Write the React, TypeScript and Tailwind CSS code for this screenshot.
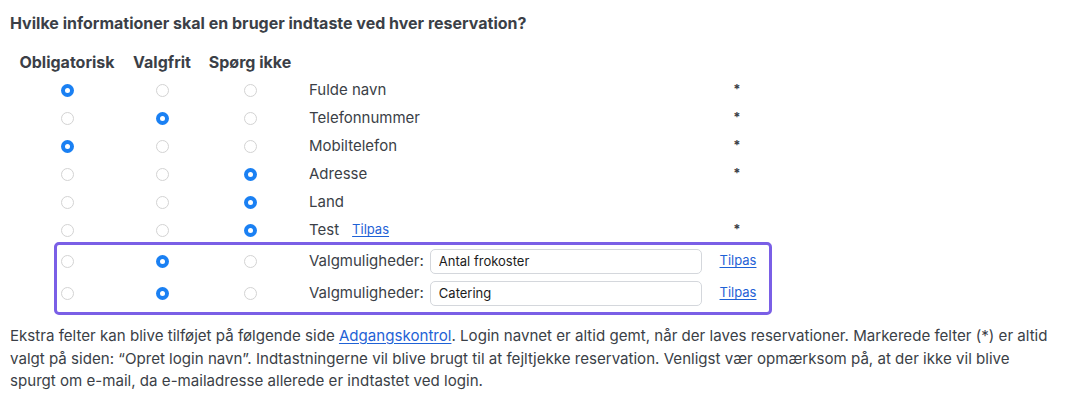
import React from "react";

type Choice = 0 | 1 | 2;

const rows: { label: string; choice: Choice; star: boolean; custom?: boolean }[] = [
  { label: "Fulde navn", choice: 0, star: true },
  { label: "Telefonnummer", choice: 1, star: true },
  { label: "Mobiltelefon", choice: 0, star: true },
  { label: "Adresse", choice: 2, star: true },
  { label: "Land", choice: 2, star: false },
  { label: "Test", choice: 2, star: true, custom: true },
];

const options = [
  { choice: 1 as Choice, value: "Antal frokoster" },
  { choice: 1 as Choice, value: "Catering" },
];

function Radio({ checked }: { checked: boolean }) {
  if (checked) {
    return (
      <span className="flex h-[13px] w-[13px] items-center justify-center rounded-full bg-[#1a80f3]">
        <span className="h-[5px] w-[5px] rounded-full bg-white" />
      </span>
    );
  }
  return <span className="block h-[13px] w-[13px] rounded-full border border-[#d3d3d3] bg-white" />;
}

function RadioCells({ choice }: { choice: Choice }) {
  return (
    <>
      <div className="flex w-[114px] items-center justify-center">
        <Radio checked={choice === 0} />
      </div>
      <div className="flex w-[76px] items-center justify-center">
        <Radio checked={choice === 1} />
      </div>
      <div className="flex w-[100px] items-center justify-center">
        <Radio checked={choice === 2} />
      </div>
    </>
  );
}

function Tilpas() {
  return (
    <a href="#" className="text-[13px] text-[#1f62d6] underline underline-offset-2">
      Tilpas
    </a>
  );
}

export default function App() {
  return (
    <div
      className="min-h-screen bg-white px-[10px] pt-[13px] text-[15px] text-[#3b3f47]"
      style={{ fontFamily: "Inter, 'Liberation Sans', sans-serif" }}
    >
      <h2 className="text-[16px] font-bold leading-[20px]">
        Hvilke informationer skal en bruger indtaste ved hver reservation?
      </h2>

      <div className="mt-[15px]">
        <div className="flex h-[28px] items-center text-[16px] font-bold">
          <div className="w-[114px] text-center">Obligatorisk</div>
          <div className="w-[76px] text-center">Valgfrit</div>
          <div className="w-[100px] text-center">Spørg ikke</div>
        </div>

        {rows.map((r) => (
          <div key={r.label} className="flex h-[28px] items-center">
            <RadioCells choice={r.choice} />
            <div className="flex w-[409px] items-center gap-[13px] pl-[9px]">
              <span>{r.label}</span>
              {r.custom && <Tilpas />}
            </div>
            <div className="w-[56px] text-center text-[13px] font-bold">{r.star ? "*" : ""}</div>
          </div>
        ))}

        <div className="relative mt-[1px]">
          {options.map((o) => (
            <div key={o.value} className="flex h-[32px] items-center">
              <RadioCells choice={o.choice} />
              <div className="flex w-[409px] items-center gap-[6px] pl-[9px]">
                <span className="whitespace-nowrap">Valgmuligheder:</span>
                <input
                  readOnly
                  value={o.value}
                  className="h-[25px] w-[272px] rounded-[5px] border border-[#d4d7dc] bg-white px-[8px] text-[13px] text-[#1c1c1c] outline-none"
                />
              </div>
              <div className="flex w-[58px] justify-center">
                <Tilpas />
              </div>
            </div>
          ))}
          {/* highlight around the custom option rows */}
          <div className="pointer-events-none absolute -bottom-[6px] -top-[3px] left-[44px] w-[718px] rounded-[5px] border-[3px] border-[#7a5fe6]" />
        </div>
      </div>

      <p className="mt-[16px] text-[15.1px] leading-[22.5px]">
        Ekstra felter kan blive tilføjet på følgende side{" "}
        <a href="#" className="text-[#1f62d6] underline underline-offset-2">
          Adgangskontrol
        </a>
        . Login navnet er altid gemt, når der laves reservationer. Markerede felter (*) er altid valgt på siden: “Opret login
        navn”. Indtastningerne vil blive brugt til at fejltjekke reservation. Venligst vær opmærksom på, at der ikke vil
        blive
        <br />
        spurgt om e-mail, da e-mailadresse allerede er indtastet ved login.
      </p>
    </div>
  );
}
